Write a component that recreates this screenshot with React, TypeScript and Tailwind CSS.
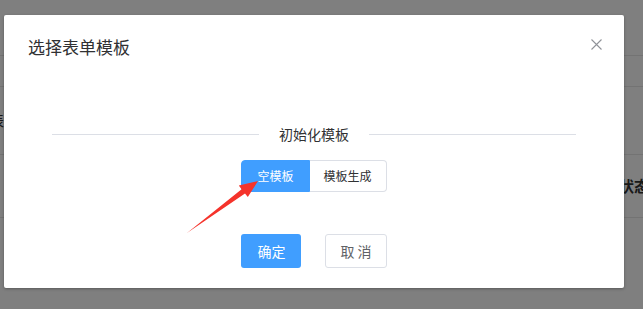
import React, { useState } from "react";

const font = { fontFamily: '"Noto Sans CJK SC", "Noto Sans", sans-serif' };

const App = () => {
  const [tab, setTab] = useState("empty");

  return (
    <div className="relative h-[309px] w-[643px] overflow-hidden bg-white text-[#333]" style={font}>
      {/* page behind the dialog */}
      <div className="flex flex-col">
        <div className="flex h-[56px] items-start border-b border-[#e6e6e6] text-[14px] font-bold">
          <span className="-mt-[18px] ml-2 w-[120px]">序号名称</span>
          <span className="-mt-[18px] w-[123px]">模板名称</span>
          <span className="-mt-[18px]">创建时间</span>
        </div>
        <div className="h-[31px] border-b border-[#e6e6e6]" />
        <div className="flex h-[68px] items-center border-b border-[#e6e6e6] text-[14px]">
          <span className="-ml-[10px]">表</span>
        </div>
        <div className="flex h-[63px] items-center justify-end border-b border-[#e6e6e6] text-[15px] font-bold">
          <span className="-mr-[6px]">状态</span>
        </div>
      </div>

      {/* overlay */}
      <div className="absolute inset-0 flex items-start bg-black/50">
        <div className="relative ml-[4px] mt-[15px] flex h-[273px] w-[620px] flex-col rounded-[2px] bg-white shadow-[0_1px_3px_rgba(0,0,0,0.3)]">
          <div className="flex items-start justify-between pl-6 pr-[22px] pt-5">
            <h1 className="text-[17px] leading-6 text-[#303133]">选择表单模板</h1>
            <button className="mt-[4px] text-[#909399]">
              <svg width="11" height="11" viewBox="0 0 11 11">
                <path d="M0.5 0.5 L10.5 10.5 M10.5 0.5 L0.5 10.5" stroke="currentColor" strokeWidth="1.1" fill="none" />
              </svg>
            </button>
          </div>

          <div className="mx-12 mt-[65px] flex h-5 items-center">
            <div className="h-px flex-1 bg-[#dcdfe6]" />
            <span className="px-5 text-[14px] text-[#303133]">初始化模板</span>
            <div className="h-px flex-1 bg-[#dcdfe6]" />
          </div>

          <div className="mt-4 flex justify-center">
            <div className="flex h-8 text-[12px]">
              <button
                onClick={() => setTab("empty")}
                className={
                  tab === "empty"
                    ? "rounded-l-[4px] border border-[#409eff] bg-[#409eff] px-[15px] text-white"
                    : "rounded-l-[4px] border border-[#dcdfe6] bg-white px-[15px] text-[#303133]"
                }
              >
                空模板
              </button>
              <button
                onClick={() => setTab("gen")}
                className={
                  tab === "gen"
                    ? "rounded-r-[4px] border border-[#409eff] bg-[#409eff] px-[14px] text-white"
                    : "rounded-r-[4px] border border-l-0 border-[#dcdfe6] bg-white px-[14px] text-[#303133]"
                }
              >
                模板生成
              </button>
            </div>
          </div>

          <div className="mt-[42px] flex justify-center gap-6">
            <button className="h-[34px] rounded-[3px] bg-[#409eff] px-4 text-[14px] text-white">确定</button>
            <button className="h-[34px] rounded-[3px] border border-[#dcdfe6] bg-white px-[14px] text-[14px] text-[#606266]">
              取 消
            </button>
          </div>

          {/* red arrow annotation */}
          <svg className="pointer-events-none absolute left-0 top-0" width="620" height="273">
            <g transform="translate(-4 -15)">
              <polygon
                points="187,233 241.6,189.3 238.8,185.5 258,181 247.8,197 245,193.4"
                fill="#f5332b"
              />
            </g>
          </svg>
        </div>
      </div>
    </div>
  );
};

export default App;
